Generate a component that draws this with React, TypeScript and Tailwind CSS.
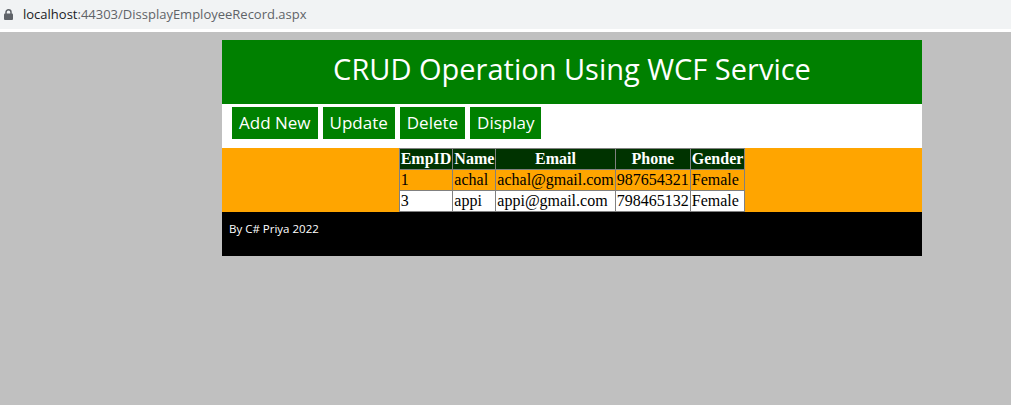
import React from 'react';

const rows = [
  { id: '1', name: 'achal', email: 'achal@gmail.com', phone: '987654321', gender: 'Female' },
  { id: '3', name: 'appi', email: 'appi@gmail.com', phone: '798465132', gender: 'Female' },
];

const buttons = ['Add New', 'Update', 'Delete', 'Display'];

export default function App() {
  return (
    <div className="h-[405px] w-[1011px] overflow-hidden bg-[#c0c0c0]">
      {/* Address bar */}
      <div className="flex h-[29px] items-center bg-[#f1f3f4] pl-[4px] font-['Open_Sans',sans-serif] text-[13px]">
        <svg width="9" height="11" viewBox="0 0 9 11" className="mr-[10px]">
          <path d="M2 5V3.3a2.5 2.5 0 0 1 5 0V5" fill="none" stroke="#5f6368" strokeWidth="1.5" />
          <rect x="0" y="4.5" width="9" height="6.5" rx="1" fill="#5f6368" />
        </svg>
        <span className="text-[#202124]">localhost</span>
        <span className="text-[#5f6368]">:44303/DissplayEmployeeRecord.aspx</span>
      </div>
      <div className="h-[3px] bg-white" />

      <div className="ml-[222px] mt-[8px] w-[700px]">
        {/* Header */}
        <div className="flex h-[64px] items-center justify-center bg-[#008000] pb-[7px] font-['Open_Sans',sans-serif] text-[29px] text-white">
          CRUD Operation Using WCF Service
        </div>

        {/* Nav */}
        <div className="flex h-[44px] items-start gap-[5px] bg-white pl-[10px] pt-[3px]">
          {buttons.map((b) => (
            <button
              key={b}
              className="flex h-[32px] items-center bg-[#008000] px-[7px] pb-[1px] font-['Open_Sans',sans-serif] text-[17px] text-white"
            >
              {b}
            </button>
          ))}
        </div>

        {/* Grid */}
        <div className="flex h-[64px] justify-center bg-[#ffa500]">
          <table className="border-collapse border border-[#808080] font-['Liberation_Serif',serif] text-[16px] leading-[20px] text-black">
            <thead>
              <tr className="bg-[#003300] text-white">
                <th className="border border-[#808080] px-[1px] font-bold">EmpID</th>
                <th className="border border-[#808080] px-[1px] font-bold">Name</th>
                <th className="border border-[#808080] px-[1px] font-bold">Email</th>
                <th className="border border-[#808080] px-[1px] font-bold">Phone</th>
                <th className="border border-[#808080] px-[1px] font-bold">Gender</th>
              </tr>
            </thead>
            <tbody>
              {rows.map((r, i) => (
                <tr key={r.id} className={i === 1 ? 'bg-white' : ''}>
                  <td className="border border-[#808080] px-[1px]">{r.id}</td>
                  <td className="border border-[#808080] px-[1px]">{r.name}</td>
                  <td className="border border-[#808080] px-[1px]">{r.email}</td>
                  <td className="border border-[#808080] px-[1px]">{r.phone}</td>
                  <td className="border border-[#808080] px-[1px]">{r.gender}</td>
                </tr>
              ))}
            </tbody>
          </table>
        </div>

        {/* Footer */}
        <div className="h-[44px] bg-black pl-[7px] pt-[8px] font-['Open_Sans',sans-serif] text-[11.5px] text-white">
          By C# Priya 2022
        </div>
      </div>
    </div>
  );
}
